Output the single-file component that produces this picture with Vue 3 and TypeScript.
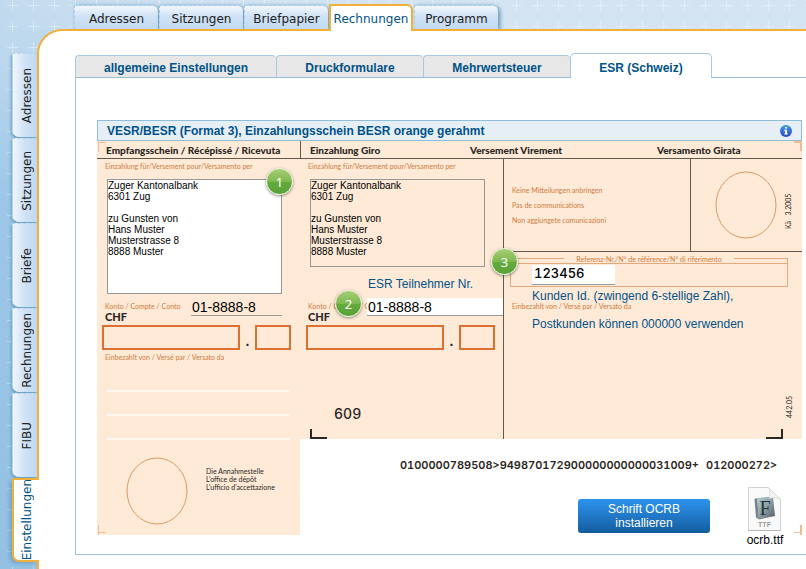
<script setup lang="ts">
import { ref } from 'vue'

const mainTabs = ['Adressen', 'Sitzungen', 'Briefpapier', 'Rechnungen', 'Programm']
const sideTabs = ['Adressen', 'Sitzungen', 'Briefe', 'Rechnungen', 'FIBU', 'Einstellungen']
const pageTabs = ['allgemeine Einstellungen', 'Druckformulare', 'Mehrwertsteuer', 'ESR (Schweiz)']

const activeMain = ref('Rechnungen')
const activeSide = ref('Einstellungen')
const activePage = ref('ESR (Schweiz)')

const address = 'Zuger Kantonalbank\n6301 Zug\n\nzu Gunsten von\nHans Muster\nMusterstrasse 8\n8888 Muster'
const receiptAddress = ref(address)
const giroAddress = ref(address)
const receiptAccount = ref('01-8888-8')
const giroAccount = ref('01-8888-8')
const customerId = ref('123456')
</script>

<template>
  <div class="app">
    <svg class="grid" aria-hidden="true">
      <defs>
        <pattern id="crosses" width="21" height="21" patternUnits="userSpaceOnUse" x="2" y="-5">
          <path d="M5 10.500h11M10.500 5v11" stroke="#fff" stroke-opacity=".35" />
        </pattern>
      </defs>
      <rect width="100%" height="100%" fill="url(#crosses)" />
    </svg>

    <nav class="main-nav" aria-label="Hauptbereiche">
      <a
        v-for="t in mainTabs"
        :key="t"
        href="#"
        :class="{ active: t === activeMain }"
        @click.prevent="activeMain = t"
      >{{ t }}</a>
    </nav>

    <nav class="side-nav" aria-label="Module">
      <a
        v-for="t in sideTabs"
        :key="t"
        href="#"
        :class="{ active: t === activeSide }"
        @click.prevent="activeSide = t"
      ><span>{{ t }}</span></a>
    </nav>

    <main class="sheet">
      <div class="page-tabs">
        <button
          v-for="t in pageTabs"
          :key="t"
          type="button"
          :class="{ active: t === activePage }"
          @click="activePage = t"
        >{{ t }}</button>
      </div>

      <div class="panel">
        <header class="panel-title">
          <h2>VESR/BESR (Format 3), Einzahlungsschein BESR orange gerahmt</h2>
          <svg class="info" viewBox="0 0 12 12" aria-hidden="true">
            <defs>
              <linearGradient id="infoFill" x1="0" y1="0" x2="0" y2="1">
                <stop offset="0" stop-color="#3f9be8" />
                <stop offset="1" stop-color="#2a43c8" />
              </linearGradient>
            </defs>
            <circle cx="6" cy="6" r="6" fill="url(#infoFill)" />
            <path d="M5 2h2v1.6H5zM4.200 4.700H7v3.700h.9v1.100H4.200V8.400H5V5.800h-.8z" fill="#fff" />
          </svg>
        </header>

        <div class="slip">
          <div class="slip-head">
            <span>Empfangsschein / Récépissé / Ricevuta</span>
            <span>Einzahlung Giro</span>
            <span>Versement Virement</span>
            <span>Versamento Girata</span>
          </div>

          <section class="receipt">
            <div class="address">
              <label class="fine" for="addr-receipt">Einzahlung für/Versement pour/Versamento per</label>
              <textarea id="addr-receipt" v-model="receiptAddress" class="solid"></textarea>
              <span class="badge">1</span>
            </div>
            <div class="account">
              <label class="fine" for="acc-receipt">Konto / Compte / Conto</label>
              <input id="acc-receipt" v-model="receiptAccount" type="text">
            </div>
            <div class="currency">CHF</div>
            <div class="amount"><i class="francs"></i><b>.</b><i class="cents"></i></div>
            <p class="fine">Einbezahlt von / Versé par / Versato da</p>
            <div class="rules"><hr><hr><hr></div>
            <div class="stamp">
              <svg class="ring" viewBox="0 0 62 68" aria-hidden="true"><ellipse cx="31" cy="34" rx="30" ry="33" /></svg>
              <p>Die Annahmestelle<br>L'office de dépôt<br>L'ufficio d'accettazione</p>
            </div>
          </section>

          <section class="giro">
            <div class="address">
              <label class="fine" for="addr-giro">Einzahlung für/Versement pour/Versamento per</label>
              <textarea id="addr-giro" v-model="giroAddress"></textarea>
              <label class="hint" for="acc-giro">ESR Teilnehmer Nr.</label>
            </div>
            <div class="account">
              <span class="fine">Konto / Compte / Conto</span>
              <input id="acc-giro" v-model="giroAccount" type="text">
              <span class="badge">2</span>
            </div>
            <div class="currency">CHF</div>
            <div class="amount"><i class="francs"></i><b>.</b><i class="cents"></i></div>
            <p class="code">609</p>
            <span class="corner left"></span>
          </section>

          <section class="transfer">
            <div class="notices">
              <p class="fine">Keine Mitteilungen anbringen<br>Pas de communications<br>Non aggiungete comunicazioni</p>
              <div class="post">
                <svg class="ring" viewBox="0 0 62 68" aria-hidden="true"><ellipse cx="31" cy="34" rx="30" ry="33" /></svg>
                <span class="vertical">Kä &nbsp; 3.2005</span>
              </div>
            </div>
            <div class="reference">
              <div class="legend"><label class="fine" for="customer">Referenz-Nr./N° de référence/N° di riferimento</label></div>
              <div class="ref-field"><input id="customer" v-model="customerId" type="text" maxlength="6"></div>
              <span class="badge">3</span>
            </div>
            <div class="explain">
              <p class="fine">Einbezahlt von / Versé par / Versato da</p>
              <p class="hint">Kunden Id. (zwingend 6-stellige Zahl),<br>Postkunden können 000000 verwenden</p>
            </div>
            <span class="vertical form-no">442.05</span>
            <span class="corner right"></span>
          </section>

          <section class="coding">
            <p class="ocr">0100000789508&gt;949870172900000000000031009+&#8199;012000272&gt;</p>
            <div class="downloads">
              <button type="button" class="install">Schrift OCRB<br>installieren</button>
              <a href="#" class="file" @click.prevent>
                <svg viewBox="0 0 36 46" aria-hidden="true">
                  <defs>
                    <linearGradient id="tile" x1="0" y1="0" x2="1" y2="1">
                      <stop offset="0" stop-color="#b4cfd6" />
                      <stop offset=".5" stop-color="#8b9da3" />
                      <stop offset="1" stop-color="#505a5e" />
                    </linearGradient>
                    <linearGradient id="fold" x1="0" y1="1" x2="1" y2="0">
                      <stop offset="0" stop-color="#fff" stop-opacity=".95" />
                      <stop offset="1" stop-color="#dcdcdc" stop-opacity=".8" />
                    </linearGradient>
                  </defs>
                  <path d="M1.500 1.500h20l12 12v31h-32z" fill="#f9f9f9" stroke="#d2d2d2" />
                  <path d="M1.500 44.500h32" stroke="#b5b5b5" />
                  <path d="M10 12 26 10.500 28 30 12 33.500z" fill="url(#tile)" />
                  <path d="M7.500 13 10 12l2 21.500-3-2z" fill="#71858c" />
                  <text x="18" y="29" text-anchor="middle" class="glyph">F</text>
                  <path d="M21.500 1.500c2 4 1.500 8 .5 11 4-1.500 8-1 11.500 1z" fill="url(#fold)" stroke="#d6d6d6" stroke-width=".7" />
                  <text x="17.500" y="41" text-anchor="middle" class="ext">TTF</text>
                </svg>
                <span>ocrb.ttf</span>
              </a>
            </div>
          </section>
          <i class="crop tl"></i><i class="crop tr"></i><i class="crop bl"></i><i class="crop br"></i>
        </div>
      </div>
    </main>
  </div>
</template>

<style>
body {
  margin: 0;
}
</style>

<style scoped>
* {
  box-sizing: border-box;
}

p, h2 {
  margin: 0;
}

.app {
  position: relative;
  isolation: isolate;
  display: grid;
  grid-template: 29px 1fr / 37px 1fr;
  min-height: 100vh;
  overflow: hidden;
  font-family: "Liberation Sans", Arial, sans-serif;
  background:
    linear-gradient(90deg, rgba(217, 231, 244, 0), rgba(217, 231, 244, .75) 260px) 0 0 / 100% 30px no-repeat,
    linear-gradient(#c3daee, #bcd7ee 60px, #9cc7e7 200px, #93c1e2);
}

.grid {
  position: absolute;
  inset: 0;
  z-index: -1;
  width: 100%;
  height: 100%;
}

.main-nav {
  grid-column: 2;
  display: flex;
  align-items: flex-end;
  gap: 1px;
  padding-left: 37px;
}

.main-nav a,
.side-nav a {
  display: flex;
  align-items: center;
  justify-content: center;
  font: 12px "DejaVu Sans", Verdana, sans-serif;
  color: #222;
  text-decoration: none;
  white-space: nowrap;
}

.main-nav a {
  width: 84px;
  height: 24px;
  padding-top: 3px;
  border: 1px dashed #a9cbe2;
  border-width: 1px 0 0 1px;
  border-radius: 0 6px 0 0;
  background: linear-gradient(#f1f7fd, #cfe2f5 45%, #c2daf2);
  box-shadow: 2px 1px 4px #5e93b8;
}

.main-nav a.active {
  position: relative;
  z-index: 2;
  height: 27px;
  margin-bottom: -2px;
  padding-top: 0;
  border: 2px solid #f0b03a;
  border-bottom: 0;
  background: #fff;
  color: #00528a;
  box-shadow: none;
}

.side-nav {
  grid-column: 1;
  display: flex;
  flex-direction: column;
  align-items: flex-end;
  gap: 1px;
  height: 0;
  padding-top: 24px;
}

.side-nav a {
  flex: none;
  width: 25px;
  height: 84px;
  padding-left: 3px;
  border: 1px dashed #b6d3e8;
  border-width: 1px 0 0 1px;
  border-radius: 0 0 0 7px;
  background: linear-gradient(90deg, #eff6fd, #cfe2f5 50%, #bfd8f1);
  box-shadow: -1px 2px 3px #6c9fc3;
}

.side-nav a span {
  writing-mode: vertical-rl;
  transform: rotate(180deg);
}

.side-nav a.active {
  position: relative;
  z-index: 2;
  width: 27px;
  margin-right: -2px;
  padding-left: 0;
  border: 2px solid #f0b03a;
  border-right: 0;
  background: #fff;
  color: #00528a;
  box-shadow: -3px 2px 4px -1px #6c9fc3;
  clip-path: inset(-4px 0 -4px -8px);
}

.sheet {
  grid-column: 2;
  min-width: 0;
  padding: 22px 0 14px 36px;
  border: 2px solid #f0b03a;
  border-width: 2px 0 0 2px;
  border-radius: 25px 0 0 0;
  background: #fff;
}

.page-tabs {
  display: flex;
  align-items: flex-end;
  height: 25px;
  border-bottom: 1px solid #97bdd8;
}

.page-tabs button {
  width: 147px;
  height: 22px;
  padding: 2px 0 0;
  border: 1px solid #a6c9df;
  border-width: 1px 0 0 1px;
  border-radius: 4px 4px 0 0;
  background: #e7e7e7;
  font: bold 12px "Liberation Sans", Arial, sans-serif;
  color: #005288;
}

.page-tabs button:first-child {
  width: 201px;
}

.page-tabs button.active {
  width: 142px;
  height: 25px;
  margin-bottom: -1px;
  padding-top: 3px;
  border-width: 1px 1px 0;
  border-radius: 5px 5px 0 0;
  background: #fff;
}

.panel {
  padding: 42px 4px 19px 21px;
  border: 1px solid #a1bfd4;
  border-width: 0 0 1px 1px;
}

.panel-title {
  display: flex;
  align-items: center;
  justify-content: space-between;
  height: 21px;
  padding: 0 9px;
  border: 1px solid #8fbedb;
  background: #e6eef6;
}

.panel-title h2 {
  font-size: 12px;
  line-height: 18px;
  color: #00528a;
}

.info {
  width: 12px;
  height: 12px;
}

.slip {
  position: relative;
  display: grid;
  grid-template: 18px 280px 96px / 203px 204px 1fr;
  color: #2b2723;
}

.slip-head {
  grid-column: 1 / -1;
  display: grid;
  grid-template-columns: 203px 161px 187px 1fr;
  border-bottom: 1px solid #65594f;
  background: #feead7;
  font: 900 10px/19px Lato, sans-serif;
}

.slip-head span {
  padding-left: 9px;
  white-space: nowrap;
}

.slip-head span:nth-child(2) {
  border-left: 1px solid #65594f;
}

.fine {
  font: 7px/15px Lato, sans-serif;
  color: #cf7a3c;
  white-space: nowrap;
}

.receipt,
.giro,
.transfer {
  position: relative;
  background: #feead7;
}

.receipt {
  grid-row: 2 / 4;
  grid-column: 1;
  padding-left: 8px;
}

.giro {
  padding-left: 8px;
  border-right: 1px solid #65594f;
}

.address {
  position: relative;
  display: flex;
  flex-direction: column;
  align-items: flex-start;
  height: 139px;
}

.address .fine {
  height: 20px;
}

textarea,
input {
  display: block;
  margin: 0;
  border: 0;
  border-radius: 0;
  outline: 0;
  background: none;
  color: #000;
}

textarea {
  width: 175px;
  height: 89px;
  margin-left: 2px;
  padding: 0;
  border: 1px solid #989898;
  font: 10px/11px "Liberation Sans", Arial, sans-serif;
  resize: none;
  overflow: hidden;
}

textarea.solid {
  height: 115px;
  background: #fff;
}

.hint {
  font-size: 12px;
  line-height: 28px;
  color: #00528a;
}

.address .hint {
  padding: 3px 0 0 60px;
}

.account {
  position: relative;
  display: flex;
  height: 18px;
}

.account .fine {
  flex: none;
  width: 86px;
  line-height: 17px;
}

.account input {
  width: 91px;
  height: 18px;
  padding: 0 1px;
  border-bottom: 1px solid #999;
  font: 14px/17px "Liberation Sans", Arial, sans-serif;
}

.giro .account .fine {
  width: 59px;
  overflow: hidden;
}

.giro .account input {
  width: 136px;
  background: #fff;
}

.currency {
  height: 9px;
  font: 900 11px/1px Lato, sans-serif;
}

.amount {
  display: flex;
  height: 25px;
  margin-left: -3px;
}

.giro .amount {
  margin-left: -2px;
}

.amount i {
  border: 2px solid #dd7030;
}

.amount .francs {
  width: 138px;
}

.amount .cents {
  width: 36px;
}

.amount b {
  width: 15px;
  font-size: 14px;
  line-height: 32px;
  text-align: center;
}

.rules {
  display: grid;
  gap: 22px;
  margin: 25px 10px 0 2px;
}

.rules hr {
  width: 100%;
  height: 2px;
  margin: 0;
  border: 0;
  background: #fff9f3;
}

.stamp {
  display: flex;
  gap: 18px;
  padding: 17px 0 0 21px;
}

.stamp p {
  padding-top: 10px;
  font: 7px/8px Lato, sans-serif;
  white-space: nowrap;
}

.ring {
  flex: none;
  width: 62px;
  height: 68px;
  fill: none;
  stroke: #d99a64;
}

.code,
.ocr,
.ref-field input {
  font-family: Inter, sans-serif;
  font-variant-numeric: tabular-nums;
}

.code {
  padding: 54px 0 0 26px;
  font-size: 14px;
  font-weight: 500;
  line-height: 20px;
}

.corner {
  position: absolute;
  bottom: 0;
  width: 17px;
  height: 10px;
  border-bottom: 2px solid #2b2723;
}

.corner.left {
  left: 10px;
  border-left: 2px solid #2b2723;
}

.corner.right {
  right: 19px;
  border-right: 2px solid #2b2723;
}

.notices {
  display: grid;
  grid-template-columns: 186px 1fr;
  height: 93px;
  border-bottom: 1px solid #65594f;
}

.notices .fine {
  padding: 24px 0 0 8px;
}

.post {
  display: flex;
  gap: 7px;
  padding: 12px 0 0 24px;
  border-left: 1px solid #65594f;
}

.vertical {
  writing-mode: vertical-rl;
  transform: rotate(180deg);
  font: 7px/9px Lato, sans-serif;
  text-align: center;
}

.form-no {
  position: absolute;
  right: 8px;
  bottom: 21px;
}

.reference {
  position: relative;
  margin: 0 14px 0 6px;
}

.legend {
  display: flex;
  gap: 12px;
  height: 11px;
}

.legend::before,
.legend::after {
  content: "";
  flex: 1;
  margin-top: 6px;
  border: 1px solid #e2aa7c;
  border-width: 1px 0 0 1px;
}

.legend::after {
  border-width: 1px 1px 0 0;
}

.ref-field {
  height: 24px;
  padding: 1px 0 0 21px;
  border: 1px solid #e2aa7c;
}

.ref-field input {
  width: 83px;
  height: 20px;
  padding: 0 2px 3px;
  border-bottom: 1px solid #999;
  background: #fff;
  font-size: 13px;
  font-weight: 500;
}

.explain {
  display: grid;
}

.explain > p {
  grid-area: 1 / 1;
}

.explain .fine {
  padding: 12px 0 0 8px;
}

.explain .hint {
  margin-top: -5px;
  padding-left: 28px;
}

.badge {
  position: absolute;
  z-index: 3;
  display: flex;
  align-items: center;
  justify-content: center;
  width: 27px;
  height: 27px;
  border: 1px solid #e9efdf;
  border-radius: 50%;
  background: linear-gradient(#a5cf75, #7fb850 50%, #64ab3c 52%, #59a238);
  box-shadow: 0 1px 3px rgba(60, 70, 40, .6);
  color: #fff;
  font: 13px "Noto Sans", sans-serif;
}

.receipt .badge {
  top: 9px;
  right: 7px;
}

.giro .badge {
  top: -8px;
  left: 27px;
}

.reference .badge {
  top: -4px;
  left: -19px;
}

.coding {
  grid-column: 2 / -1;
  padding: 17px 16px 0 100px;
}

.ocr {
  font-size: 11px;
  font-weight: 600;
  line-height: 18px;
  white-space: nowrap;
}

.downloads {
  display: flex;
  justify-content: flex-end;
  gap: 34px;
  padding-top: 12px;
}

.install {
  width: 132px;
  height: 34px;
  margin-top: 13px;
  padding: 0;
  border: 0;
  border-radius: 3px;
  background: linear-gradient(#2e94ee, #135c9e);
  color: #fff;
  font: 12px/14px "Liberation Sans", Arial, sans-serif;
}

.file {
  display: flex;
  flex-direction: column;
  align-items: center;
  width: 42px;
  height: 49px;
  color: #000;
  font-size: 12px;
  line-height: 16px;
  text-decoration: none;
}

.file svg {
  flex: none;
  width: 36px;
  height: 46px;
}

.glyph {
  font: 20px "Liberation Serif", serif;
  fill: #27343a;
}

.ext {
  font: bold 7px "Liberation Sans", sans-serif;
  fill: #999;
}

.crop {
  position: absolute;
  width: 8px;
  height: 10px;
  border: 0 solid #f0bb92;
}

.tl {
  top: 1px;
  left: 1px;
  border-width: 1px 0 0 1px;
}

.tr {
  top: 0;
  right: 0;
  border-width: 2px 2px 0 0;
}

.bl {
  bottom: 0;
  left: 1px;
  border-left-width: 1px;
  background: linear-gradient(#f0bb92, #f0bb92) 0 7px / 8px 1px no-repeat;
}

.br {
  bottom: 0;
  right: 0;
  border-right-width: 2px;
  background: linear-gradient(#f0bb92, #f0bb92) 0 7px / 8px 1px no-repeat;
}
</style>
